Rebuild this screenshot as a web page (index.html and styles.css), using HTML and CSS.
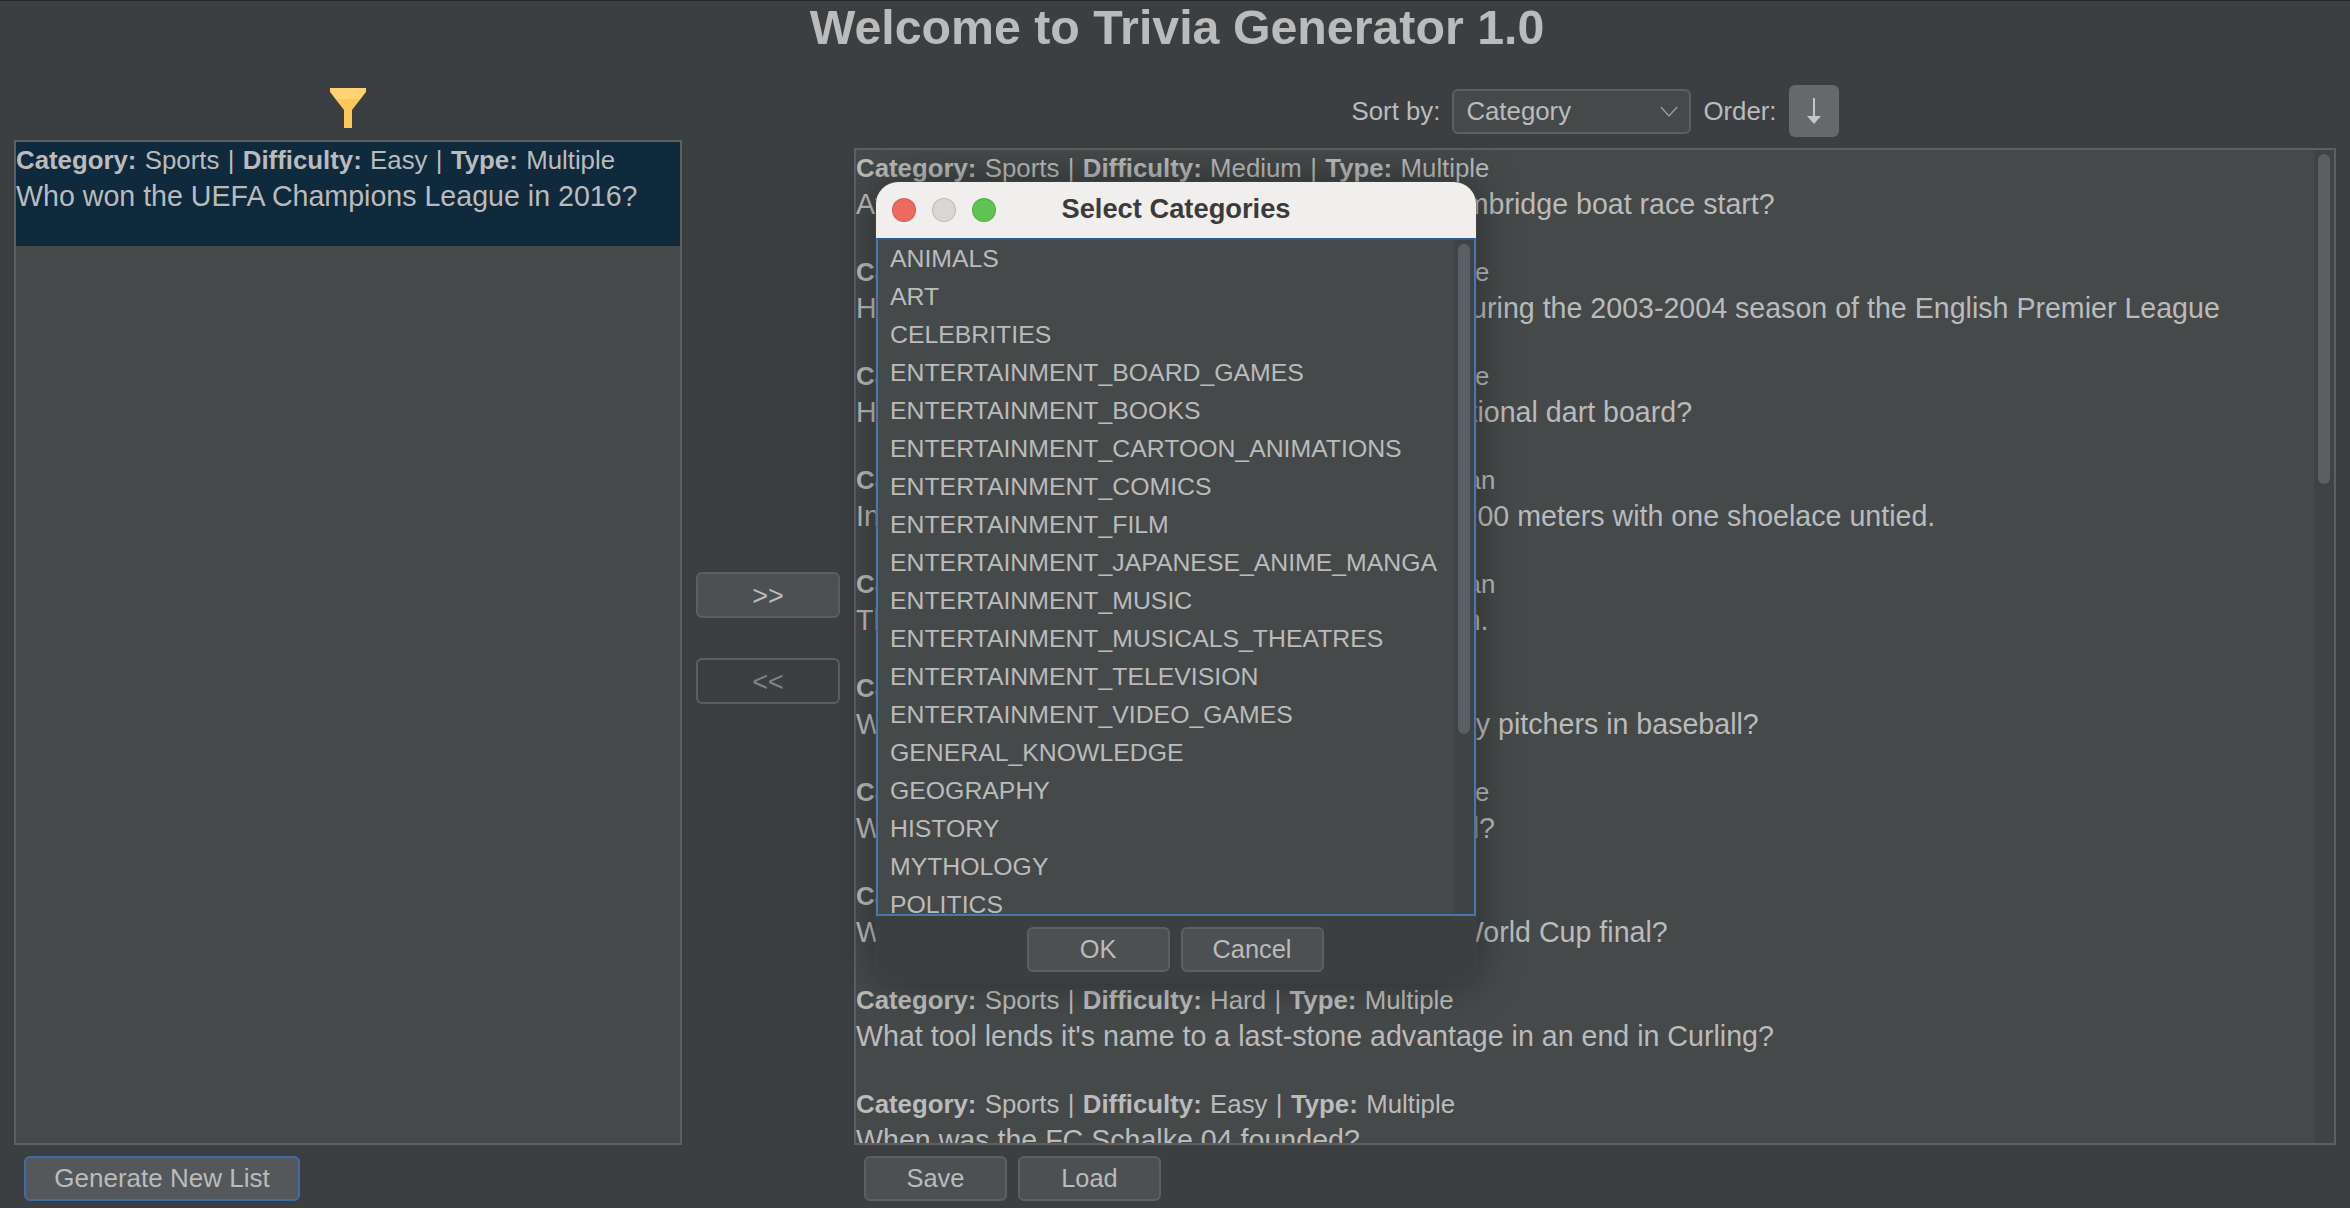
FILE: index.html
```html
<!DOCTYPE html>
<html lang="en">
<head>
    <meta charset="UTF-8">
    <title>Trivia Generator</title>
    <link rel="stylesheet" href="styles.css">
</head>
<body>
    <h1 class="title">Welcome to Trivia Generator 1.0</h1>

    <div class="main">
        <div class="col">
            <div class="filter-bar">
                <svg class="funnel" width="36" height="40" viewBox="0 0 36 40">
                    <path d="M0 0H36V4L22 22V40H14V22L0 4Z" fill="#fdc659"/>
                    <path d="M0 0H36V2L30 11H6L0 2Z" fill="#ffd374"/>
                </svg>
            </div>
            <div class="list">
                <div class="list-text">
                    <div class="item selected">
                        <div><b>Category:</b> Sports | <b>Difficulty:</b> Easy | <b>Type:</b> Multiple</div>
                        <div class="question">Who won the UEFA Champions League in 2016?</div>
                    </div>
                </div>
            </div>
        </div>

        <div class="move-btns">
            <button class="btn btn-move">&gt;&gt;</button>
            <button class="btn btn-move btn-off">&lt;&lt;</button>
        </div>

        <div class="col">
            <div class="sort-bar">
                <span>Sort by:</span>
                <div class="select">
                    <span>Category</span>
                    <svg width="18" height="11" viewBox="0 0 20 12"><path d="M1 1L10 11L19 1" fill="none" stroke="#9a9c9d" stroke-width="1.5"/></svg>
                </div>
                <span>Order:</span>
                <button class="btn-order">
                    <svg width="16" height="28" viewBox="0 0 16 28"><path d="M8 1V20" stroke="#c4c6c7" stroke-width="2"/><path d="M1 19H15L8 27Z" fill="#c4c6c7"/></svg>
                </button>
            </div>
            <div class="list">
                <div class="list-text">
                    <div class="item">
                        <div><b>Category:</b> Sports | <b>Difficulty:</b> Medium | <b>Type:</b> Multiple</div>
                        <div class="question">At which bridge does the famous Oxford and Cambridge boat race start?</div>
                    </div>
                    <div class="item">
                        <div><b>Category:</b> Sports | <b>Difficulty:</b> Medium | <b>Type:</b> Multiple</div>
                        <div class="question">How many games did Arsenal FC go unbeaten during the 2003-2004 season of the English Premier League</div>
                    </div>
                    <div class="item">
                        <div><b>Category:</b> Sports | <b>Difficulty:</b> Medium | <b>Type:</b> Multiple</div>
                        <div class="question">How many points does a bullseye give on a traditional dart board?</div>
                    </div>
                    <div class="item">
                        <div><b>Category:</b> Sports | <b>Difficulty:</b> Medium | <b>Type:</b> Boolean</div>
                        <div class="question">In 2009, Usain Bolt tied the world record for the 100 meters with one shoelace untied.</div>
                    </div>
                    <div class="item">
                        <div><b>Category:</b> Sports | <b>Difficulty:</b> Medium | <b>Type:</b> Boolean</div>
                        <div class="question">The first modern Olympics were hosted in Boston.</div>
                    </div>
                    <div class="item">
                        <div><b>Category:</b> Sports | <b>Difficulty:</b> Easy | <b>Type:</b> Multiple</div>
                        <div class="question">What is the name of the fast pitch thrown by many pitchers in baseball?</div>
                    </div>
                    <div class="item">
                        <div><b>Category:</b> Sports | <b>Difficulty:</b> Medium | <b>Type:</b> Multiple</div>
                        <div class="question">Which team has won the most trophies in football?</div>
                    </div>
                    <div class="item">
                        <div><b>Category:</b> Sports | <b>Difficulty:</b> Easy | <b>Type:</b> Multiple</div>
                        <div class="question">Who scored the deciding goal in the 2014 FIFA World Cup final?</div>
                    </div>
                    <div class="item">
                        <div><b>Category:</b> Sports | <b>Difficulty:</b> Hard | <b>Type:</b> Multiple</div>
                        <div class="question">What tool lends it's name to a last-stone advantage in an end in Curling?</div>
                    </div>
                    <div class="item">
                        <div><b>Category:</b> Sports | <b>Difficulty:</b> Easy | <b>Type:</b> Multiple</div>
                        <div class="question">When was the FC Schalke 04 founded?</div>
                    </div>
                </div>
                <div class="scroll-track"><div class="scroll-thumb thumb-main"></div></div>
            </div>
        </div>
    </div>

    <div class="bottom">
        <div class="bottom-left">
            <button class="btn btn-generate">Generate New List</button>
        </div>
        <div></div>
        <div class="bottom-right">
            <button class="btn">Save</button>
            <button class="btn">Load</button>
        </div>
    </div>

    <div class="dialog">
        <div class="dialog-head">
            <div class="lights">
                <span class="light red"></span>
                <span class="light grey"></span>
                <span class="light green"></span>
            </div>
            <div class="dialog-title">Select Categories</div>
        </div>
        <div class="cat-list">
            <ul class="cats">
                <li>ANIMALS</li>
                <li>ART</li>
                <li>CELEBRITIES</li>
                <li>ENTERTAINMENT_BOARD_GAMES</li>
                <li>ENTERTAINMENT_BOOKS</li>
                <li>ENTERTAINMENT_CARTOON_ANIMATIONS</li>
                <li>ENTERTAINMENT_COMICS</li>
                <li>ENTERTAINMENT_FILM</li>
                <li>ENTERTAINMENT_JAPANESE_ANIME_MANGA</li>
                <li>ENTERTAINMENT_MUSIC</li>
                <li>ENTERTAINMENT_MUSICALS_THEATRES</li>
                <li>ENTERTAINMENT_TELEVISION</li>
                <li>ENTERTAINMENT_VIDEO_GAMES</li>
                <li>GENERAL_KNOWLEDGE</li>
                <li>GEOGRAPHY</li>
                <li>HISTORY</li>
                <li>MYTHOLOGY</li>
                <li>POLITICS</li>
            </ul>
            <div class="scroll-track"><div class="scroll-thumb thumb-cats"></div></div>
        </div>
        <div class="dialog-btns">
            <button class="btn">OK</button>
            <button class="btn">Cancel</button>
        </div>
    </div>
</body>
</html>
```

FILE: styles.css
```css
* {
    margin: 0;
    padding: 0;
    box-sizing: border-box;
    list-style: none;
}
html, body {
    height: 1208px;
    overflow: hidden;
}
body {
    background: #3c3f41;
    border-top: 1px solid #23272b;
    color: #bbbbbb;
    font-family: "Liberation Sans", Arial, sans-serif;
    font-size: 25.8px;
    position: relative;
}
.title {
    height: 55px;
    line-height: 52px;
    padding-left: 4px;
    font-size: 48.3px;
    text-align: center;
}

/* three columns: picked list, move buttons, full list */
.main {
    height: 1089px;
    display: grid;
    grid-template-columns: 668px 172px 1482px;
    padding-left: 14px;
}
.col {
    display: flex;
    flex-direction: column;
    min-height: 0;
}
.filter-bar {
    height: 84px;
    display: flex;
    justify-content: center;
    padding-top: 32px;
}
.sort-bar {
    height: 92px;
    display: flex;
    justify-content: center;
    align-items: center;
    gap: 12px;
    padding-top: 18px;
}
.list {
    flex: 1;
    min-height: 0;
    display: flex;
    background: #45494a;
    border: 2px solid #5e6060;
    overflow: hidden;
}
.list-text {
    flex: 1;
    min-width: 0;
}
.item {
    height: 104px;
    line-height: 36px;
    white-space: nowrap;
    word-spacing: 1.2px;
}
.question {
    font-size: 28.6px;
    word-spacing: 0;
}
.selected {
    background: #0f293d;
}
.scroll-track {
    width: 20px;
    flex-shrink: 0;
    background: #3f4345;
    padding: 4px;
}
.scroll-thumb {
    background: #5a5f63;
    border-radius: 6px;
}
.thumb-main {
    height: 330px;
}
.thumb-cats {
    height: 490px;
}

.select {
    width: 239px;
    height: 45px;
    display: flex;
    justify-content: space-between;
    align-items: center;
    padding: 0 11px 0 12px;
    background: #45494a;
    border: 2px solid #5e6060;
    border-radius: 6px;
}
.btn-order {
    width: 50px;
    height: 52px;
    display: flex;
    justify-content: center;
    align-items: center;
    background: #65696b;
    border: 0;
    border-radius: 6px;
}

.btn {
    width: 143px;
    height: 45px;
    background: #4c5052;
    border: 2px solid #5e6060;
    border-radius: 6px;
    color: #bbbbbb;
    font-family: inherit;
    font-size: 25.4px;
}
.move-btns {
    display: flex;
    flex-direction: column;
    align-items: center;
    justify-content: center;
    gap: 40px;
    padding-top: 74px;
}
.btn-move {
    width: 144px;
    height: 46px;
    padding-top: 3px;
    font-size: 27px;
}
.btn-off {
    background: transparent;
    color: #808284;
}
.bottom {
    display: grid;
    grid-template-columns: 668px 172px 1482px;
    padding: 11px 0 0 14px;
}
.bottom-left, .bottom-right {
    display: flex;
    gap: 11px;
    padding-left: 10px;
}
.btn-generate {
    width: 276px;
    background: #54585b;
    border-color: #3f6da3;
    font-size: 26px;
}

/* modal over the page */
.dialog {
    position: absolute;
    left: 876px;
    top: 181px;
    width: 600px;
    height: 800px;
    display: flex;
    flex-direction: column;
    background: #3c3f41;
    border-radius: 22px;
    box-shadow: 0 0 44px rgba(0, 0, 0, 0.4), 0 0 0 1px rgba(90, 93, 95, 0.4);
    overflow: hidden;
}
.dialog-head {
    height: 56px;
    flex-shrink: 0;
    display: grid;
    grid-template-columns: 1fr auto 1fr;
    align-items: center;
    background: #f0efed;
}
.lights {
    display: flex;
    gap: 16px;
    padding-left: 16px;
}
.light {
    width: 24px;
    height: 24px;
    border-radius: 50%;
    border: 1px solid rgba(0, 0, 0, 0.12);
}
.red {
    background: #ee6a5f;
}
.grey {
    background: #d8d7d5;
}
.green {
    background: #5fc454;
}
.dialog-title {
    color: #3b3b3b;
    font-size: 27.3px;
    font-weight: bold;
    padding-bottom: 2px;
}
.cat-list {
    height: 678px;
    flex-shrink: 0;
    display: flex;
    background: #45494a;
    border: 2px solid #4a76ab;
    border-top-color: #2f5a8c;
    overflow: hidden;
}
.cats {
    flex: 1;
    min-width: 0;
    padding-left: 12px;
    font-size: 24.8px;
}
.cats li {
    height: 38px;
    line-height: 38px;
}
.dialog-btns {
    flex: 1;
    display: flex;
    justify-content: center;
    gap: 11px;
    padding: 11px 2px 0 0;
}
```
